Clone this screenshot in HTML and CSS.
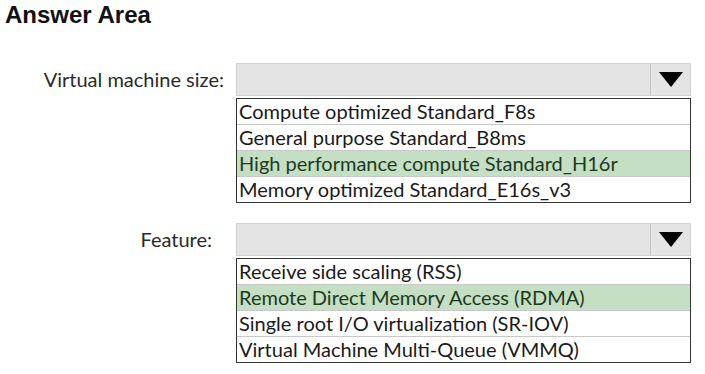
FILE: index.html
```html
<!DOCTYPE html>
<html lang="en">
<head>
  <meta charset="UTF-8" />
  <title>Answer Area</title>
  <link rel="stylesheet" href="styles.css">
</head>
<body>

<h1>Answer Area</h1>

<div class="question">
  <div class="label">Virtual machine size:</div>
  <div class="picker">
    <div class="select">
      <span class="value"></span>
      <span class="arrow"></span>
    </div>
    <ul class="options">
      <li>Compute optimized Standard_F8s</li>
      <li>General purpose Standard_B8ms</li>
      <li class="correct">High performance compute Standard_H16r</li>
      <li>Memory optimized Standard_E16s_v3</li>
    </ul>
  </div>
</div>

<div class="question">
  <div class="label label-short">Feature:</div>
  <div class="picker">
    <div class="select">
      <span class="value"></span>
      <span class="arrow"></span>
    </div>
    <ul class="options">
      <li>Receive side scaling (RSS)</li>
      <li class="correct">Remote Direct Memory Access (RDMA)</li>
      <li>Single root I/O virtualization (SR-IOV)</li>
      <li>Virtual Machine Multi-Queue (VMMQ)</li>
    </ul>
  </div>
</div>

</body>
</html>
```

FILE: styles.css
```css
body {
  margin: 0;
  background: #fff;
  color: #222;
  font-family: Lato, "Open Sans", sans-serif;
}

h1 {
  margin: 0;
  padding: 1px 0 0 5px;
  font-family: "Liberation Sans", Arial, sans-serif;
  font-size: 24px;
  font-weight: bold;
  line-height: 28px;
  color: #111;
}

.question {
  display: grid;
  grid-template-columns: 236px 455px;
  margin-top: 34px;
}

.question + .question {
  margin-top: 20px;
}

.label {
  text-align: right;
  padding-right: 12px;
  font-size: 20px;
  line-height: 32px;
  color: #2a2a2a;
}

.label-short {
  padding-right: 24px;
}

.select {
  display: flex;
  height: 31px;
  background: #e4e4e4;
  border: 1px solid #d2d2d2;
}

.value {
  flex: 1;
}

.arrow {
  width: 39px;
  border-left: 1px solid #c4c4c4;
  display: flex;
  align-items: center;
  justify-content: center;
}

.arrow::after {
  content: "";
  border-left: 12px solid transparent;
  border-right: 12px solid transparent;
  border-top: 15px solid #000;
}

.options {
  list-style: none;
  margin: 2px 0 0;
  padding: 0;
  border: 1px solid #333;
}

.options li {
  height: 25px;
  padding-left: 2px;
  font-size: 20px;
  line-height: 25px;
  color: #1a1a1a;
  border-bottom: 1px solid #c8c8c8;
}

.options li:last-child {
  border-bottom: none;
}

.options li.correct {
  background: #c5dfc4;
  color: #1e3a1e;
}
```
